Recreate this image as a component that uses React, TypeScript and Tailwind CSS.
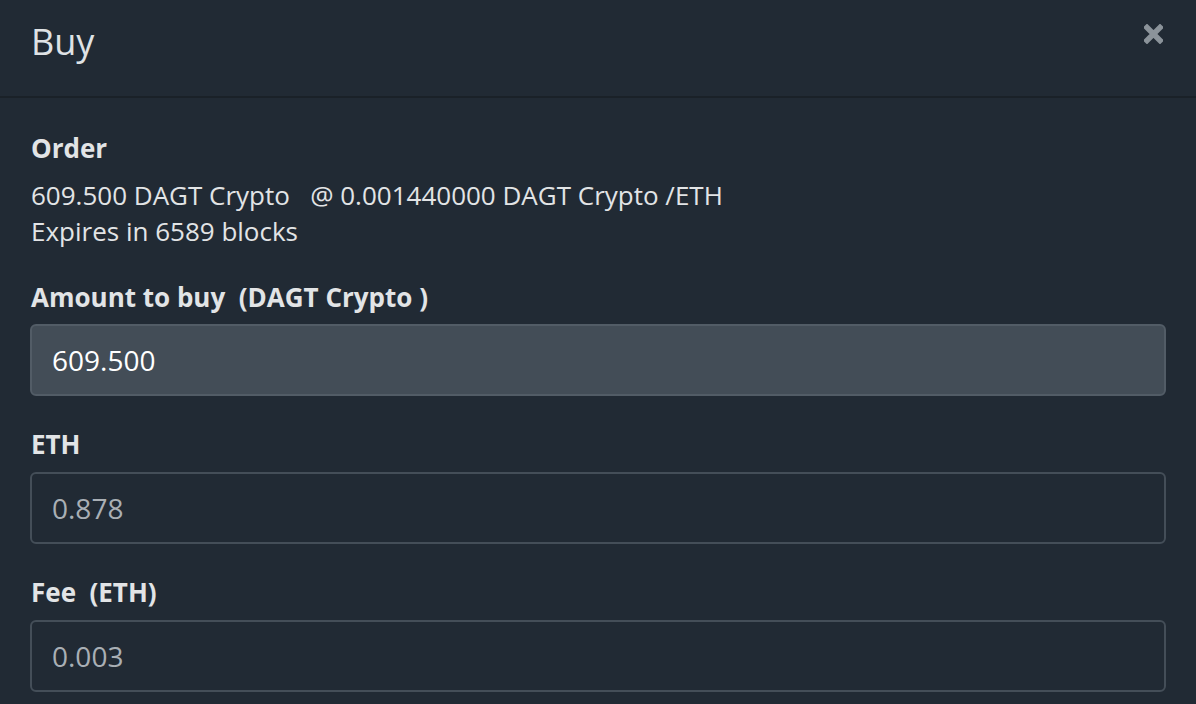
import React from "react";

const fields = [
  { label: "Amount to buy  (DAGT Crypto )", value: "609.500", active: true },
  { label: "ETH", value: "0.878", active: false },
  { label: "Fee  (ETH)", value: "0.003", active: false },
];

export default function App() {
  return (
    <div className="h-[704px] w-[1196px] overflow-hidden bg-[#212a34] font-['Open_Sans',sans-serif] text-[#e2e4e6]">
      <div className="flex h-[98px] items-start justify-between border-b-2 border-[#1a2128] pl-[31px] pr-[33px]">
        <h1 className="mt-[16px] text-[36px] leading-[52px] text-[#dfe2e5]">Buy</h1>
        <button className="mt-[24px] text-[#8b939a]" aria-label="close">
          <svg width="19" height="20" viewBox="0 0 19 20">
            <path d="M3 3.5 L16 16.5 M16 3.5 L3 16.5" stroke="currentColor" strokeWidth="5.5" strokeLinecap="square" />
          </svg>
        </button>
      </div>

      <div className="px-[30px] pt-[32px]">
        <div className="pl-px">
          <div className="text-[26px] font-bold leading-[36px]">Order</div>
          <div className="mt-[11px] whitespace-pre text-[26px] leading-[36px]">
            {"609.500 DAGT Crypto   @ 0.001440000 DAGT Crypto /ETH"}
          </div>
          <div className="text-[26px] leading-[36px]">Expires in 6589 blocks</div>
        </div>

        {fields.map((f, i) => (
          <div key={i} className={i === 0 ? "mt-[30px]" : "mt-[30px]"}>
            <div className="whitespace-pre pl-px text-[26px] font-bold leading-[36px]">{f.label}</div>
            <div
              className={
                (i === 0 ? "mt-[9px] " : "mt-[10px] ") +
                "flex h-[72px] w-[1136px] items-center rounded-[6px] border-2 pl-[20px] text-[28px] " +
                (f.active
                  ? "border-[#525c66] bg-[#434d57] text-white"
                  : "border-[#444e58] bg-[#212a34] text-[#a9afb5]")
              }
            >
              {f.value}
            </div>
          </div>
        ))}
      </div>
    </div>
  );
}
